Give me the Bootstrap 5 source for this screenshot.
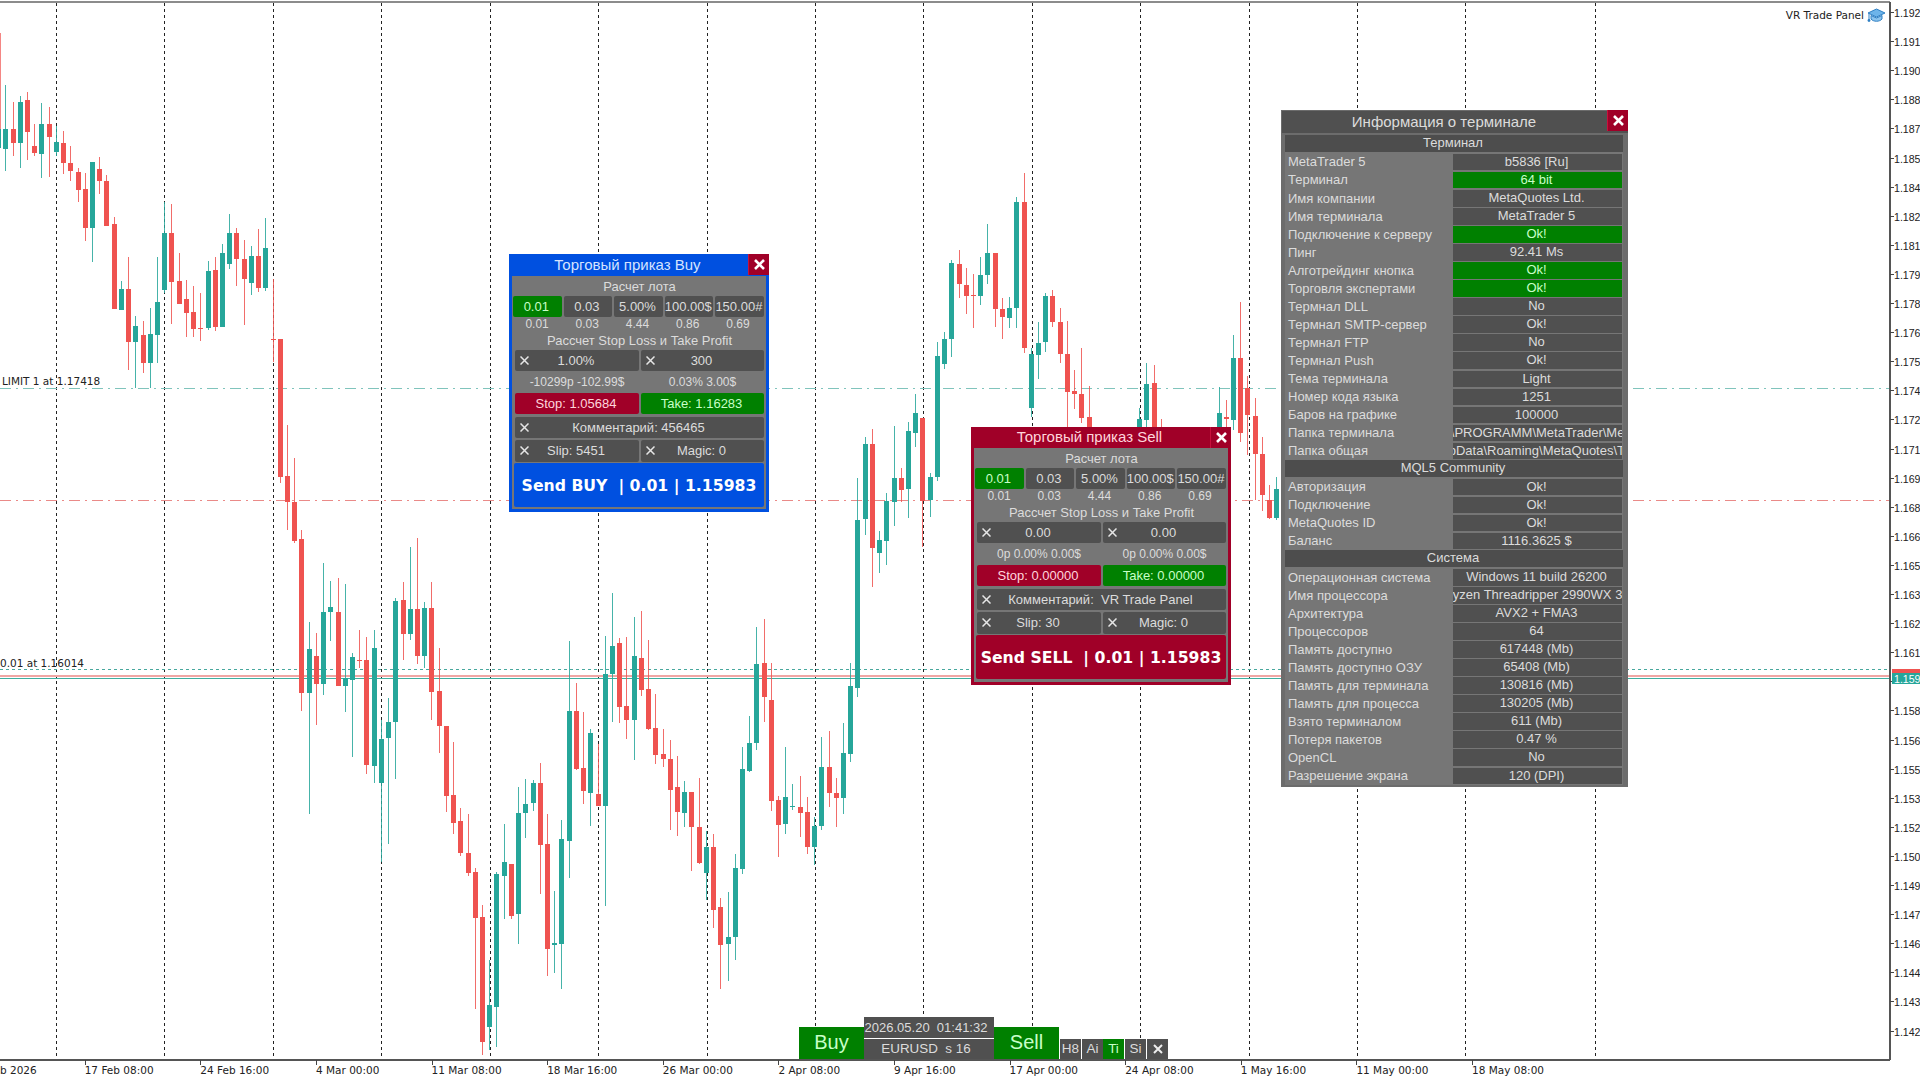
<!DOCTYPE html>
<html lang="ru">

<head>
  <meta charset="utf-8" />
  <meta name="viewport" content="width=device-width, initial-scale=1" />
  <title>EURUSD H8 - VR Trade Panel</title>
  <link href="https://cdn.jsdelivr.net/npm/bootstrap@5.3.0/dist/css/bootstrap.min.css" rel="stylesheet" />
  <style>
    html, body { width: 1920px; height: 1081px; overflow: hidden; background: #fff; }
    body { font-family: "Liberation Sans", Arial, sans-serif; font-size: 13px; color: #dcdcdc; }

    #chart { position: absolute; left: 0; top: 0; }
    #chart text { font-family: "DejaVu Sans", sans-serif; font-size: 10.5px; fill: #222; }
    #chart text.px { font-family: "Liberation Sans", sans-serif; font-size: 10.6px; }

    /* order windows */
    .tp-win { position: absolute; width: 260px; height: 258px; padding: 0 3px 3px; border: 0; border-radius: 0; }
    .tp-buy { left: 509px; top: 254px; background: #0050e0; }
    .tp-sell { left: 971px; top: 427px; background: #a00028; }
    .tp-title { height: 22px; font-size: 15px; line-height: 21px; color: #d6e4ff; text-align: center; padding-right: 23px; }
    .tp-sell .tp-title { height: 21px; line-height: 20px; color: #ffd5dc; }
    .tp-close { position: absolute; right: 0; top: 0; width: 21px; height: 21px; background: #a00028; border-left: 1px solid #c8103c; }
    .tp-body { height: 233px; background: #767676; padding: 0 2px 0 3px; }
    .tp-sell .tp-body { height: 234px; }
    .tp-line { text-align: center; white-space: nowrap; }
    .tp-head { height: 20px; line-height: 21px; }
    .tp-sub { height: 19px; line-height: 20px; }
    .tp-cols { display: grid; grid-template-columns: repeat(5, 1fr); gap: 2px; width: 251px; margin-left: -2px; }
    .tp-vals { height: 14px; line-height: 14px; font-size: 12px; text-align: center; padding-right: 2px; }
    .tp-split { display: grid; grid-template-columns: 124px 123px; gap: 2px; }
    .tp-info { height: 22px; line-height: 22px; font-size: 12px; text-align: center; padding-right: 2px; }
    .tp-btn { height: 21px; padding: 0 2px 0 0; border: 0; border-radius: 2px; background: #505050; color: #dcdcdc; font-size: 13px; line-height: 21px; white-space: nowrap; overflow: hidden; position: relative; text-align: center; }
    .tp-btn.tall { height: 22px; line-height: 22px; }
    .tp-on { background: #008000; color: #c8ffc8; }
    .tp-red { background: #a00028; color: #ffd5dc; }
    .tp-x { position: absolute; left: 5px; top: 6px; width: 9px; height: 9px; }
    .tp-gap { height: 3px; }
    .slip-row { margin-top: 2px; }
    .tp-send { height: 44px; margin-left: -1px; width: 250px; margin-top: 1px; border-radius: 2px; color: #fff; font-family: "DejaVu Sans", sans-serif; font-weight: 700; font-size: 15.7px; line-height: 46px; text-align: center; white-space: pre; }
    .tp-buy .tp-send { background: #0050e0; }
    .tp-sell .tp-send { background: #a00028; }

    /* terminal info window */
    .ti-win { position: absolute; left: 1281px; top: 110px; width: 347px; height: 677px; background: #6c6c6c; border: 0; border-radius: 0; }
    .ti-title { height: 22px; margin: 1px 0 0 1px; background: #505050; font-size: 15px; line-height: 21px; text-align: center; padding-right: 22px; color: #dcdcdc; }
    .ti-body { margin: 2.4px 5px 0 4px; background: #767676; }
    .ti-row { display: flex; height: 18.05px; }
    .ti-name { width: 168px; padding-left: 3px; line-height: 17px; white-space: nowrap; }
    .ti-val { width: 169px; height: 16.5px; background: #505050; display: flex; justify-content: center; line-height: 16px; overflow: hidden; white-space: nowrap; margin-top: .5px; padding-right: 2px; }
    .ti-val.ok { background: #008000; color: #c8ffc8; }
    .ti-sec { height: 16.5px; margin-bottom: 1.55px; background: #4d4d4d; line-height: 16px; text-align: center; padding-right: 2px; }

    /* bottom control strip */
    .bar-item { position: absolute; background: #505050; color: #dcdcdc; text-align: center; white-space: pre; border-radius: 0; }
    .bar-big { background: #008000; color: #c8ffc8; font-size: 20px; line-height: 31px; top: 1027px; height: 32px; width: 65px; }
    .bar-tab { top: 1039px; height: 20px; width: 21px; line-height: 20px; font-size: 13.5px; }
    .bar-tab.tp-on { background: #008000; color: #c8ffc8; }
    #clock { left: 864px; top: 1017px; width: 130px; height: 21px; line-height: 21px; font-size: 13px; padding-right: 6px; }
    #sym { left: 864px; top: 1039px; width: 130px; height: 20px; line-height: 20px; font-size: 13.4px; padding-right: 6px; }

    .vr-tag { position: absolute; right: 34px; top: 7px; display: flex; align-items: center; gap: 3px; font-family: "DejaVu Sans", sans-serif; font-size: 10.5px; color: #222; line-height: 16px; }
  </style>
</head>

<body>

  <svg id="chart" width="1920" height="1081" xmlns="http://www.w3.org/2000/svg"></svg>

  <div class="vr-tag">
    <span>VR Trade Panel</span>
    <svg width="19" height="15" viewBox="0 0 19 15">
      <path d="M4 7.5V11C6.5 14 12.500 14 15 11V7.5L9.500 10Z" fill="#8cc4ee" stroke="#2f80c4" />
      <path d="M1 5L9.500 1 18 5 9.500 9Z" fill="#6db4ea" stroke="#2f80c4" />
      <path d="M2 5.500V12" stroke="#2f80c4" />
      <circle cx="2" cy="12.500" r="1.400" fill="#2f80c4" />
    </svg>
  </div>

  <!-- buy window -->
  <div class="card tp-win tp-buy">
    <div class="tp-title">Торговый приказ Buy</div>
    <div class="tp-close"><svg class="d-block m-auto mt-1" width="13" height="13" viewBox="0 0 13 13"><path d="M2 2L11 11M11 2L2 11" stroke="#fff" stroke-width="2.600" /></svg></div>
    <div class="tp-body">
      <div class="tp-line tp-head">Расчет лота</div>
      <div class="tp-cols">
        <button class="btn tp-btn tp-on">0.01</button>
        <button class="btn tp-btn">0.03</button>
        <button class="btn tp-btn">5.00%</button>
        <button class="btn tp-btn">100.00$</button>
        <button class="btn tp-btn">150.00#</button>
      </div>
      <div class="tp-cols tp-vals"><span>0.01</span><span>0.03</span><span>4.44</span><span>0.86</span><span>0.69</span></div>
      <div class="tp-line tp-sub">Рассчет Stop Loss и Take Profit</div>
      <div class="tp-split">
        <button class="btn tp-btn">1.00%<svg class="tp-x" viewBox="0 0 9 9"><path d="M.5 .5L8.500 8.500M8.500 .5L.5 8.500" stroke="#e6e6e6" stroke-width="1.500" /></svg></button>
        <button class="btn tp-btn">300<svg class="tp-x" viewBox="0 0 9 9"><path d="M.5 .5L8.500 8.500M8.500 .5L.5 8.500" stroke="#e6e6e6" stroke-width="1.500" /></svg></button>
      </div>
      <div class="tp-split tp-info"><span>-10299p -102.99$</span><span>0.03% 3.00$</span></div>
      <div class="tp-split">
        <button class="btn tp-btn tp-red">Stop: 1.05684</button>
        <button class="btn tp-btn tp-on">Take: 1.16283</button>
      </div>
      <div class="tp-gap"></div>
      <button class="btn tp-btn d-block w-100">Комментарий: 456465<svg class="tp-x" viewBox="0 0 9 9"><path d="M.5 .5L8.500 8.500M8.500 .5L.5 8.500" stroke="#e6e6e6" stroke-width="1.500" /></svg></button>
      <div class="tp-split slip-row">
        <button class="btn tp-btn tall">Slip: 5451<svg class="tp-x" viewBox="0 0 9 9"><path d="M.5 .5L8.500 8.500M8.500 .5L.5 8.500" stroke="#e6e6e6" stroke-width="1.500" /></svg></button>
        <button class="btn tp-btn tall">Magic: 0<svg class="tp-x" viewBox="0 0 9 9"><path d="M.5 .5L8.500 8.500M8.500 .5L.5 8.500" stroke="#e6e6e6" stroke-width="1.500" /></svg></button>
      </div>
      <div class="tp-send">Send BUY  | 0.01 | 1.15983</div>
    </div>
  </div>

  <!-- sell window -->
  <div class="card tp-win tp-sell">
    <div class="tp-title">Торговый приказ Sell</div>
    <div class="tp-close"><svg class="d-block m-auto mt-1" width="13" height="13" viewBox="0 0 13 13"><path d="M2 2L11 11M11 2L2 11" stroke="#fff" stroke-width="2.600" /></svg></div>
    <div class="tp-body">
      <div class="tp-line tp-head">Расчет лота</div>
      <div class="tp-cols">
        <button class="btn tp-btn tp-on">0.01</button>
        <button class="btn tp-btn">0.03</button>
        <button class="btn tp-btn">5.00%</button>
        <button class="btn tp-btn">100.00$</button>
        <button class="btn tp-btn">150.00#</button>
      </div>
      <div class="tp-cols tp-vals"><span>0.01</span><span>0.03</span><span>4.44</span><span>0.86</span><span>0.69</span></div>
      <div class="tp-line tp-sub">Рассчет Stop Loss и Take Profit</div>
      <div class="tp-split">
        <button class="btn tp-btn">0.00<svg class="tp-x" viewBox="0 0 9 9"><path d="M.5 .5L8.500 8.500M8.500 .5L.5 8.500" stroke="#e6e6e6" stroke-width="1.500" /></svg></button>
        <button class="btn tp-btn">0.00<svg class="tp-x" viewBox="0 0 9 9"><path d="M.5 .5L8.500 8.500M8.500 .5L.5 8.500" stroke="#e6e6e6" stroke-width="1.500" /></svg></button>
      </div>
      <div class="tp-split tp-info"><span>0p 0.00% 0.00$</span><span>0p 0.00% 0.00$</span></div>
      <div class="tp-split">
        <button class="btn tp-btn tp-red">Stop: 0.00000</button>
        <button class="btn tp-btn tp-on">Take: 0.00000</button>
      </div>
      <div class="tp-gap"></div>
      <button class="btn tp-btn d-block w-100">Комментарий:&nbsp; VR Trade Panel<svg class="tp-x" viewBox="0 0 9 9"><path d="M.5 .5L8.500 8.500M8.500 .5L.5 8.500" stroke="#e6e6e6" stroke-width="1.500" /></svg></button>
      <div class="tp-split slip-row">
        <button class="btn tp-btn tall">Slip: 30<svg class="tp-x" viewBox="0 0 9 9"><path d="M.5 .5L8.500 8.500M8.500 .5L.5 8.500" stroke="#e6e6e6" stroke-width="1.500" /></svg></button>
        <button class="btn tp-btn tall">Magic: 0<svg class="tp-x" viewBox="0 0 9 9"><path d="M.5 .5L8.500 8.500M8.500 .5L.5 8.500" stroke="#e6e6e6" stroke-width="1.500" /></svg></button>
      </div>
      <div class="tp-send">Send SELL  | 0.01 | 1.15983</div>
    </div>
  </div>

  <!-- terminal info -->
  <div class="card ti-win">
    <div class="ti-title">Информация о терминале</div>
    <div class="tp-close"><svg class="d-block m-auto mt-1" width="13" height="13" viewBox="0 0 13 13"><path d="M2 2L11 11M11 2L2 11" stroke="#fff" stroke-width="2.600" /></svg></div>
    <div class="ti-body" id="info"></div>
  </div>

  <!-- bottom strip -->
  <div class="bar-item bar-big" style="left:799px">Buy</div>
  <div class="bar-item" id="clock">2026.05.20  01:41:32</div>
  <div class="bar-item" id="sym">EURUSD  s 16</div>
  <div class="bar-item bar-big" style="left:994px">Sell</div>
  <div class="bar-item bar-tab" style="left:1060px">H8</div>
  <div class="bar-item bar-tab" style="left:1082px">Ai</div>
  <div class="bar-item bar-tab tp-on" style="left:1103px">Ti</div>
  <div class="bar-item bar-tab" style="left:1125px">Si</div>
  <div class="bar-item bar-tab" style="left:1147px"><svg class="d-block mx-auto mt-1" width="12" height="12" viewBox="0 0 12 12"><path d="M2 2L10 10M10 2L2 10" stroke="#eee" stroke-width="2" /></svg></div>

  <script src="https://cdn.jsdelivr.net/npm/bootstrap@5.3.0/dist/js/bootstrap.bundle.min.js"></script>

  <script>
    // i, up?, body top, body bottom, wick top, wick bottom (screen px)
    const bars = [
      [-1,1,129,148,129,148],
      [0,1,129,149,85,171],[1,0,129,143,102,156],[2,1,102,143,96,168],[3,0,100,132,92,160],[4,0,146,153,124,156],
      [5,1,124,154,103,178],[6,0,124,137,107,177],[7,1,142,152,126,156],[8,0,143,163,131,174],[9,0,163,171,146,181],
      [10,0,172,190,168,202],[11,0,189,228,173,241],[12,1,162,228,162,262],[13,0,169,181,157,194],[14,0,181,226,175,226],
      [15,0,224,309,217,309],[16,1,289,310,281,310],[17,0,289,342,257,370],[18,1,326,342,316,388],[19,0,335,363,321,373],
      [20,1,334,363,308,388],[21,1,302,335,257,363],[22,1,233,290,202,293],[23,0,233,282,204,324],[24,0,281,304,253,304],
      [25,0,299,313,280,337],[26,0,312,329,286,337],[27,0,328,329,293,341],[28,1,271,328,261,330],[29,0,270,327,257,331],
      [30,1,253,327,244,327],[31,1,233,264,214,269],[32,0,233,259,228,286],[33,0,259,279,240,325],[34,1,256,283,246,295],
      [35,0,256,288,229,292],[36,1,248,288,218,291],[37,0,339,340,279,362],[38,0,339,477,339,483],[39,0,476,502,425,530],
      [40,0,502,541,458,543],[41,0,539,693,530,711],[42,1,649,693,622,814],[43,0,656,684,633,725],[44,1,612,684,563,695],
      [45,1,607,612,581,641],[46,0,612,686,578,686],[47,1,678,686,584,712],[48,1,657,680,653,757],[49,0,660,661,630,668],
      [50,0,660,765,637,774],[51,1,648,766,630,783],[52,1,739,783,720,862],[53,1,722,738,698,844],[54,1,601,722,598,779],
      [55,0,600,634,582,660],[56,1,609,634,547,640],[57,0,609,656,538,664],[58,1,608,656,602,668],[59,0,608,692,582,720],
      [60,0,691,726,648,753],[61,0,726,796,726,812],[62,0,795,823,742,834],[63,0,821,853,808,856],[64,0,853,873,814,876],
      [65,0,872,918,868,1009],[66,0,917,1042,905,1055],[67,1,1005,1027,960,1050],[68,1,874,1007,872,1047],[69,1,862,876,824,919],
      [70,0,864,916,864,919],[71,1,813,914,787,944],[72,1,804,813,779,838],[73,1,783,803,780,811],[74,0,783,845,763,894],
      [75,0,844,949,814,976],[76,1,943,945,891,973],[77,1,839,944,820,989],[78,1,711,841,641,878],[79,0,711,769,683,770],
      [80,0,768,791,712,804],[81,1,733,793,729,826],[82,0,794,806,744,806],[83,1,674,806,636,906],[84,1,646,674,593,722],
      [85,0,643,707,638,723],[86,0,706,720,637,739],[87,1,656,720,617,760],[88,0,658,690,611,696],[89,0,689,729,640,730],
      [90,0,728,755,694,764],[91,0,754,759,729,767],[92,0,759,790,740,830],[93,0,787,812,756,836],[94,1,792,813,781,827],
      [95,0,792,827,792,871],[96,0,827,863,778,864],[97,1,847,873,831,900],[98,0,847,910,834,928],[99,0,907,945,898,989],
      [100,1,937,944,892,981],[101,1,868,937,854,960],[102,1,769,869,747,874],[103,1,743,771,716,772],[104,1,664,743,627,750],
      [105,0,663,697,619,722],[106,0,700,801,663,811],[107,0,800,825,796,857],[108,1,797,824,747,834],[109,1,806,807,784,810],
      [110,0,807,813,776,837],[111,0,812,847,797,854],[112,1,826,847,817,865],[113,1,767,826,737,830],[114,0,767,793,731,807],
      [115,0,793,798,778,827],[116,1,753,798,723,814],[117,1,686,754,663,762],[118,1,520,688,478,697],[119,1,444,519,437,535],
      [120,0,444,548,429,587],[121,1,540,553,531,573],[122,1,501,541,493,565],[123,1,478,502,426,526],[124,0,478,490,468,502],
      [125,1,431,489,422,518],[126,1,413,433,394,447],[127,0,418,501,418,547],[128,1,477,500,473,517],[129,1,356,477,342,481],
      [130,1,339,364,332,369],[131,1,263,339,260,357],[132,0,264,284,250,298],[133,0,285,296,268,314],[134,0,295,296,274,328],
      [135,1,275,296,257,305],[136,1,253,275,224,284],[137,0,253,309,253,327],[138,0,309,317,298,339],[139,1,308,318,297,328],
      [140,1,202,308,197,328],[141,0,202,348,173,353],[142,1,354,408,348,417],[143,1,343,355,322,379],[144,1,296,342,293,352],
      [145,0,296,322,290,327],[146,0,322,354,308,363],[147,0,354,392,321,430],[148,0,391,394,370,409],[149,0,394,418,348,423],
      [150,0,417,440,386,440],[157,1,419,440,408,440],[158,1,384,420,363,430],[159,0,383,440,365,440],[160,0,430,440,419,440],
      [168,1,413,440,387,440],[169,0,417,419,400,430],[170,1,358,420,335,430],[171,0,358,433,302,442],[172,0,388,415,376,455],
      [173,0,416,454,398,500],[174,0,454,495,437,511],[175,0,500,518,485,519],[176,1,489,518,477,520],
    ];

    const prices = ['1.192','1.191','1.190','1.188','1.187','1.185','1.184','1.182','1.181','1.179','1.178','1.176','1.175','1.174',
      '1.172','1.171','1.169','1.168','1.166','1.165','1.163','1.162','1.161','','1.158','1.156','1.155','1.153','1.152','1.150',
      '1.149','1.147','1.146','1.144','1.143','1.142'];

    const times = [['b 2026', 0], ['17 Feb 08:00', 84.7], ['24 Feb 16:00', 200.3], ['4 Mar 00:00', 316], ['11 Mar 08:00', 431.6],
      ['18 Mar 16:00', 547.2], ['26 Mar 00:00', 662.8], ['2 Apr 08:00', 778.4], ['9 Apr 16:00', 894], ['17 Apr 00:00', 1009.6],
      ['24 Apr 08:00', 1125.2], ['1 May 16:00', 1240.8], ['11 May 00:00', 1356.4], ['18 May 08:00', 1472]];

    let s = '';
    const line = (x1, y1, x2, y2, attrs) => { s += `<line x1="${x1}" y1="${y1}" x2="${x2}" y2="${y2}" ${attrs}/>`; };
    const label = (x, y, t, extra = '') => { s += `<text x="${x}" y="${y}" ${extra}>${t}</text>`; };

    // period separators
    const seps = [];
    for (let k = 0; k < 14; k++) seps.push(Math.round(56 + 108.42 * k) + 0.5);
    seps.push(1595.5);
    seps.forEach(x => line(x, 3, x, 1059, 'stroke="#222" stroke-dasharray="3 3"'));

    // order and price levels
    line(0, 388.5, 1890, 388.5, 'stroke="#80c4bc" stroke-dasharray="11 5 2 5"');
    line(0, 500.5, 1890, 500.5, 'stroke="#ea8a88" stroke-dasharray="11 5 2 5"');
    line(0, 669.5, 1890, 669.5, 'stroke="#48a89e" stroke-dasharray="3 3"');
    line(0, 676, 1890, 676, 'stroke="#f0a6a4" stroke-width="2"');
    line(0, 678.5, 1890, 678.5, 'stroke="#3fae9f"');

    // candles
    bars.forEach(([i, up, top, bot, hi, lo]) => {
      const x = 5.3 + 7.222 * i;
      const col = up ? '#26a69a' : '#ef5350';
      const cx = Math.round(x) + 0.5;
      line(cx, hi, cx, lo, `stroke="${col}" stroke-opacity="0.85"`);
      s += `<rect x="${cx - 2.5}" y="${top}" width="5" height="${Math.max(bot - top, 1)}" fill="${col}"/>`;
    });
    line(0.5, 33, 0.5, 129, 'stroke="#ef5350" stroke-opacity="0.7"');

    // frame
    s += '<rect x="0" y="0" width="1920" height="2" fill="#fff"/>';
    line(0, 2, 1890, 2, 'stroke="#666" stroke-width="1.500"');
    line(1890, 2, 1890, 1060, 'stroke="#555" stroke-width="2"');
    line(0, 1060, 1890, 1060, 'stroke="#555" stroke-width="2"');
    s += '<rect x="1891" y="0" width="29" height="1081" fill="#fff"/>';
    s += '<rect x="0" y="1061" width="1920" height="20" fill="#fff"/>';

    label(2, 385, 'LIMIT 1 at 1.17418');
    label(0, 667, '0.01 at 1.16014');

    prices.forEach((p, k) => {
      const y = Math.round(12 + 29.1 * k);
      line(1890, y + 0.5, 1894, y + 0.5, 'stroke="#444"');
      if (p) label(1894, y + 4.5, p, 'class="px"');
    });
    s += '<rect x="1892" y="669" width="28" height="4" fill="#ef5350"/><rect x="1892" y="673" width="28" height="11" fill="#26a69a"/>';
    label(1894, 682.5, '1.159', 'class="px" style="fill:#fff"');

    times.forEach(([t, x]) => {
      if (x) line(Math.round(x) + 0.5, 1060, Math.round(x) + 0.5, 1065, 'stroke="#444"');
      label(x, 1074, t);
    });
    document.getElementById('chart').innerHTML = s;

    // terminal info table
    const rows = [
      ['#', 'Терминал'],
      ['MetaTrader 5', 'b5836 [Ru]'], ['Терминал', '64 bit', 1], ['Имя компании', 'MetaQuotes Ltd.'], ['Имя терминала', 'MetaTrader 5'],
      ['Подключение к серверу', 'Ok!', 1], ['Пинг', '92.41 Ms'], ['Алготрейдинг кнопка', 'Ok!', 1], ['Торговля экспертами', 'Ok!', 1],
      ['Термнал DLL', 'No'], ['Термнал SMTP-сервер', 'Ok!'], ['Термнал FTP', 'No'], ['Термнал Push', 'Ok!'], ['Тема терминала', 'Light'],
      ['Номер кода языка', '1251'], ['Баров на графике', '100000'],
      ['Папка терминала', 'D:\\PROGRAMM\\MetaTrader\\Meta'], ['Папка общая', '\\ppData\\Roaming\\MetaQuotes\\Ter'],
      ['#', 'MQL5 Community'],
      ['Авторизация', 'Ok!'], ['Подключение', 'Ok!'], ['MetaQuotes ID', 'Ok!'], ['Баланс', '1116.3625 $'],
      ['#', 'Система'],
      ['Операционная система', 'Windows 11 build 26200'], ['Имя процессора', 'Ryzen Threadripper 2990WX 32'], ['Архитектура', 'AVX2 + FMA3'],
      ['Процессоров', '64'], ['Память доступно', '617448 (Mb)'], ['Память доступно ОЗУ', '65408 (Mb)'], ['Память для терминала', '130816 (Mb)'],
      ['Память для процесса', '130205 (Mb)'], ['Взято терминалом', '611 (Mb)'], ['Потеря пакетов', '0.47 %'], ['OpenCL', 'No'], ['Разрешение экрана', '120 (DPI)'],
    ];
    document.getElementById('info').innerHTML = rows.map(([a, b, ok]) => a === '#'
      ? `<div class="ti-sec">${b}</div>`
      : `<div class="ti-row"><div class="ti-name">${a}</div><div class="ti-val${ok ? ' ok' : ''}">${b}</div></div>`).join('');
  </script>
</body>

</html>
